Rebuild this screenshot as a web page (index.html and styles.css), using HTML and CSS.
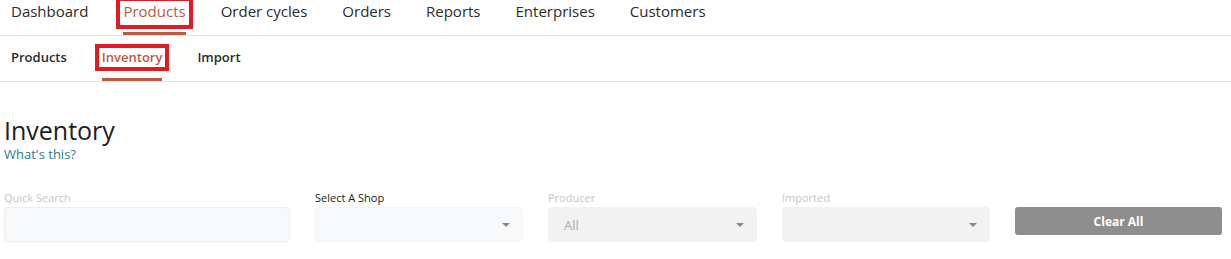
FILE: index.html
```html
<!DOCTYPE html>
<html lang="en">
<head>
  <meta charset="UTF-8">
  <title>Inventory</title>
  <link rel="stylesheet" href="styles.css">
</head>
<body>

<!-- Main menu -->
<nav class="main-nav">
  <a class="tab" href="#"><span class="tab-label">Dashboard</span><span class="tab-bar"></span></a>
  <a class="tab active" href="#"><span class="tab-label marked">Products</span><span class="tab-bar"></span></a>
  <a class="tab" href="#"><span class="tab-label">Order cycles</span><span class="tab-bar"></span></a>
  <a class="tab" href="#"><span class="tab-label">Orders</span><span class="tab-bar"></span></a>
  <a class="tab" href="#"><span class="tab-label">Reports</span><span class="tab-bar"></span></a>
  <a class="tab" href="#"><span class="tab-label">Enterprises</span><span class="tab-bar"></span></a>
  <a class="tab" href="#"><span class="tab-label">Customers</span><span class="tab-bar"></span></a>
</nav>

<!-- Sub menu -->
<nav class="sub-nav">
  <a class="tab" href="#"><span class="tab-label">Products</span><span class="tab-bar"></span></a>
  <a class="tab active" href="#"><span class="tab-label marked">Inventory</span><span class="tab-bar"></span></a>
  <a class="tab" href="#"><span class="tab-label">Import</span><span class="tab-bar"></span></a>
</nav>

<div class="page">
  <h1 class="page-title">Inventory</h1>
  <a class="help-link" href="#">What's this?</a>

  <div class="filters">
    <div class="filter">
      <label class="muted">Quick Search</label>
      <input type="text" class="field">
    </div>
    <div class="filter">
      <label>Select A Shop</label>
      <div class="field select"><span></span><i class="caret"></i></div>
    </div>
    <div class="filter">
      <label class="muted">Producer</label>
      <div class="field select disabled"><span>All</span><i class="caret"></i></div>
    </div>
    <div class="filter">
      <label class="muted">Imported</label>
      <div class="field select disabled"><span></span><i class="caret"></i></div>
    </div>
    <div class="filter">
      <label>&nbsp;</label>
      <button class="clear-btn">Clear All</button>
    </div>
  </div>
</div>

</body>
</html>
```

FILE: styles.css
```css
* {
  box-sizing: border-box;
}
body {
  margin: 0;
  font-family: 'Open Sans', sans-serif;
  background: #fff;
  color: #222;
}
a {
  text-decoration: none;
}
/* Menus */
.main-nav,
.sub-nav {
  display: flex;
  gap: 29px;
  padding-left: 8px;
  border-bottom: 1px solid #e2e2e2;
}
.main-nav {
  padding-top: 1px;
  height: 36px;
}
.sub-nav {
  padding-top: 12px;
  height: 46px;
}
.tab {
  display: flex;
  flex-direction: column;
  color: #2b2b2b;
}
.tab-label {
  padding: 0 3px 4px;
  line-height: 20px;
  font-size: 15px;
  font-weight: 500;
}
.sub-nav .tab-label {
  padding: 0 3px 1px;
  line-height: 18px;
  font-size: 13px;
  font-weight: 600;
}
.tab-bar {
  height: 3px;
  margin: 7px 3px 0;
}
.sub-nav .tab-bar {
  margin-top: 11px;
}
.tab.active {
  color: #c0583f;
}
.tab.active .tab-bar {
  background: #c0583f;
}
.marked {
  outline: 4px solid #e01b24;
}
/* Page */
.page {
  padding: 33px 4px 0;
}
.page-title {
  margin: 0;
  font-size: 25px;
  line-height: 31px;
  font-weight: 400;
  color: #1c1c1c;
}
.help-link {
  display: block;
  font-size: 13px;
  line-height: 17px;
  color: #2e7b93;
}
/* Filters */
.filters {
  display: flex;
  gap: 25px;
  margin-top: 27px;
}
.filter {
  display: flex;
  flex-direction: column;
  width: 208px;
}
.filter:first-child {
  width: 286px;
}
.filter:nth-child(3) {
  width: 209px;
}
.filter:last-child {
  width: 207px;
}
.filter label {
  font-size: 11px;
  line-height: 15px;
  margin-bottom: 2px;
  color: #222;
}
.filter label.muted {
  color: #c6c6c6;
}
.field {
  height: 35px;
  border: 1px solid #eceef1;
  border-radius: 4px;
  background: #f8f9fb;
  font-family: inherit;
}
.select {
  display: flex;
  align-items: center;
  justify-content: space-between;
  padding: 0 12px 0 15px;
  font-size: 13px;
  color: #aaa;
  border-color: #f4f5f7;
}
.select.disabled {
  background: #f2f2f2;
  border-color: #f2f2f2;
}
.caret {
  width: 0;
  height: 0;
  border-left: 4px solid transparent;
  border-right: 4px solid transparent;
  border-top: 4px solid #888;
}
.clear-btn {
  height: 28px;
  border: none;
  border-radius: 3px;
  background: #8e8e8e;
  color: #fff;
  font-family: inherit;
  font-size: 12px;
  font-weight: 700;
}
```
